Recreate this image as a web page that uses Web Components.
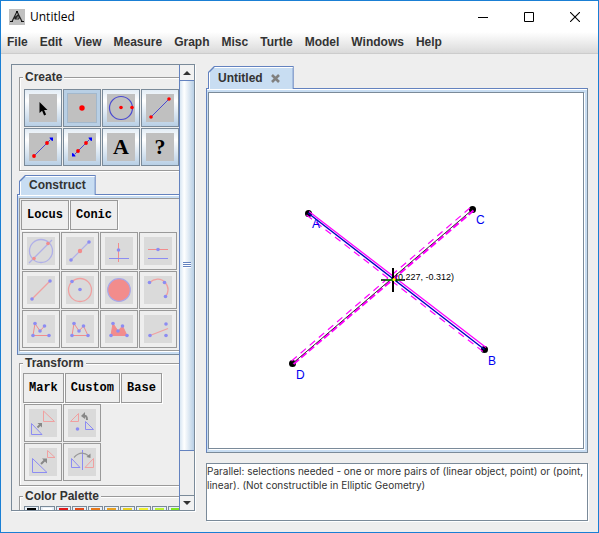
<!DOCTYPE html>
<html lang="en">
<head>
<meta charset="utf-8">
<title>Untitled</title>
<style>
body { margin: 0; font: bold 12px/15px "Liberation Sans", Arial, sans-serif; color: #333; }
</style>
</head>
<body>
<app-window></app-window>
<script>
const define = (name, html, setup) => {
  const tpl = document.createElement('template');
  tpl.innerHTML = html;
  customElements.define(name, class extends HTMLElement {
    constructor() {
      super();
      this.attachShadow({ mode: 'open' }).append(tpl.content.cloneNode(true));
    }
    connectedCallback() { if (setup) setup.call(this, this.shadowRoot); }
  });
};

const R = '#ff0000', LINE = '#4a4ad0';
const r = '#f28c8c', b = '#8c8cf2', lr = '#f0a0a0', lb = '#b0b0e8';
const dot = (x, y, c, s = 1.8) => `<circle cx="${x}" cy="${y}" r="${s}" fill="${c}"/>`;
const seg = (d, c, w = 1) => `<path d="${d}" fill="none" stroke="${c}" stroke-width="${w}"/>`;
const ICONS = {
  select: '<path d="M10.5 8v11l2.6-2.3 2 4.7 2-.9-2-4.5h3.4z" fill="#000"/>',
  point: dot(14, 14, R, 2.7),
  circle: '<circle cx="14" cy="14" r="11.5" fill="none" stroke="#4a4ad0" stroke-width="1.2"/>' + dot(14, 13.5, R) + dot(25, 13.5, R),
  segment: seg('M5 23L23 5', LINE) + dot(5, 23, R) + dot(23, 5, R),
  ray: seg('M5 23L21 7', LINE) + dot(5, 23, R, 1.9) + dot(18, 10, R, 1.9) + '<path d="M20.500 4.500H24V8L22.500 7.500 21 6z" fill="#00f"/>',
  line: seg('M7 21L21 7', LINE) + dot(10, 18, R, 1.9) + dot(18, 10, R, 1.9) + '<path d="M20.500 4.500H24V8L22.500 7.500 21 6zM4 20V23.500H7.500L7 22 5.500 20.500z" fill="#00f"/>',
  text: '<text x="14" y="21" text-anchor="middle">A</text>',
  help: '<text x="14" y="21" text-anchor="middle">?</text>',
  intersect: `<circle cx="14" cy="14" r="11.500" fill="none" stroke="${lb}" stroke-width="1.300"/>` + seg('M2 26L25 3', lb, 1.3) + dot(21, 6.5, r) + dot(7, 21.5, r),
  midpoint: seg('M5 23L23 5', lb, 1.2) + dot(5, 23, b) + dot(23, 5, b) + dot(14, 14, r, 2.2),
  perpendicular: seg('M13.500 6v19', r) + seg('M4 21.500h20', b) + dot(13.5, 13, b),
  parallel: seg('M4 12.500h20', r) + seg('M4 21.500h20', b) + dot(14, 12.5, b),
  segment2: seg('M5 23L23 5', lr, 1.2) + dot(5, 23, b) + dot(23, 5, b),
  circle2: `<circle cx="14" cy="14" r="11.500" fill="none" stroke="${lr}" stroke-width="1.300"/>` + dot(14, 13.5, b) + dot(6, 5.5, b),
  disc: `<circle cx="14" cy="14" r="11.300" fill="${r}" stroke="#a8a8e8" stroke-width="1.200"/>`,
  arc: seg('M5.500 6.500C10 2.500 17 1.500 21 6.500C25.500 11 24.500 17 21.500 20.500', lr, 1.3) + dot(5.5, 6.5, b) + dot(20.5, 6.5, b) + dot(21.5, 20.5, b),
  polyline: seg('M22 20.500H6L8 8.500L13 16L17.500 11', r) + [[6, 20.5], [8, 8.5], [13, 16], [17.5, 11], [22, 20.5]].map(p => dot(...p, b)).join(''),
  polygon: seg('M22 20.500H6L8 8.500L13 16L17.500 11Z', r) + [[6, 20.5], [8, 8.5], [13, 16], [17.5, 11], [22, 20.5]].map(p => dot(...p, b)).join(''),
  area: `<path d="M22 20.500H6L8 8.500L13 16L17.500 11Z" fill="${r}" stroke="${r}"/>` + [[6, 20.5], [8, 8.5], [13, 16], [17.5, 11], [22, 20.5]].map(p => dot(...p, b)).join(''),
  bisector: seg('M6 20.500L24 13.500', lr, 1.3) + dot(6, 20.5, b) + dot(22, 9, b) + dot(22, 20.5, b),
  translate: seg('M14.500 2v10.500H25.500Z', lr) + seg('M2.500 14.500V25.500H13Z', b) + seg('M8.500 18.500L12 15', '#888', 2) + '<path d="M8.500 14H13v4.500z" fill="#888"/>',
  rotate: seg('M2.500 12.500L10.500 4.500V12.500Z', lr) + seg('M17.500 12.500V20.500H25.500Z', b) + dot(9.5, 20, b) + seg('M15 7q4-1.500 4 4', '#888', 2) + '<path d="M13 7l4-4v7z" fill="#888"/>',
  dilate: seg('M3.500 10.500V24.500H18Z', b) + seg('M18.500 2.500V9.500H26Z', lr) + seg('M12 16L16 12', '#888', 2) + '<path d="M13 10.500h5v5z" fill="#888"/>',
  reflect: seg('M14.500 2v20', b) + seg('M3.500 10.500V19.500H12Z', b) + seg('M25.500 10.500V19.500H17Z', lr) + seg('M6 9.500Q13 1.500 21 8', '#999', 1.2) + '<path d="M18.500 9l4-3.500v4.500z" fill="#888"/>'
};

define('tool-button', `
<style>
:host { display: block; }
button { display: block; width: 38px; height: 38px; padding: 4px; margin: 0; box-sizing: border-box;
  border: 1px solid #7a8a99; background: linear-gradient(#e2ecf5, #fff 30%, #b8cfe5); }
svg { display: block; width: 28px; height: 28px; background: #c0c0c0; }
text { font: bold 22px "Liberation Serif", serif; fill: #000; }
:host([pressed]) button { background: #b8cfe5; padding: 3px; }
:host([pressed]) svg { border: 1px solid #a3b8cc; }
:host([disabled]) button { background: #eee; border-color: #999; }
:host([disabled]) svg { background: #dadada; }
</style>
<button type="button"><svg viewBox="0 0 28 28"></svg></button>`, function (root) {
  const name = this.getAttribute('icon');
  const button = root.querySelector('button');
  button.setAttribute('aria-label', name);
  button.disabled = this.hasAttribute('disabled');
  if (this.hasAttribute('pressed')) button.setAttribute('aria-pressed', 'true');
  root.querySelector('svg').innerHTML = ICONS[name];
});

define('tool-grid', `
<style>:host { display: grid; grid-template-columns: repeat(var(--cols, 4), 38px); gap: 1px; padding: var(--grid-top, 1px) 1px 1px; }</style>
<slot></slot>`);

define('menu-choice', `
<style>
:host { display: block; }
button { display: block; height: 30px; margin: 0; padding: 0 5px; background: #eee; border: 1px solid #999;
  box-shadow: 1px 1px 0 #fff; color: #000; font: bold 12px/15px "Liberation Mono", "Courier New", monospace; }
</style>
<button type="button"><slot></slot></button>`);

define('choice-row', `<style>:host { display: flex; gap: 1px; }</style><slot></slot>`);

define('titled-group', `
<style>
:host { display: block; }
fieldset { margin: 0; padding: var(--pad-top, 3px) 3px 3px; border: 1px solid #999; min-width: 0;
  box-shadow: 1px 1px 0 #fff, inset 1px 1px 0 #fff; }
legend { padding: 0 2px; margin-left: 0; background: #eee; }
</style>
<fieldset><legend></legend><slot></slot></fieldset>`, function (root) {
  root.querySelector('legend').textContent = this.getAttribute('label');
});

define('tab-pane', `
<style>
:host { display: flex; flex-direction: column; }
.tab { align-self: flex-start; position: relative; z-index: 1; margin: 0 0 -1px 2px; padding: 1px 1px 0;
  background: #6382bf; clip-path: polygon(6px 0, 100% 0, 100% 100%, 0 100%, 0 6px); }
.face { display: flex; align-items: center; gap: 8px; height: var(--tab-height, 19px); padding: 0 9px 1px 8px;
  background: #c8ddf2; border: solid #fff; border-width: 1px 0 0 1px; box-sizing: border-box;
  clip-path: polygon(6px 0, 100% 0, 100% 100%, 0 100%, 0 6px); }
.close { border: 0; padding: 0; margin: 0 4px 0 0; width: 9px; height: 9px; background: none; display: none; }
:host([closable]) .close { display: block; }
svg { display: block; }
.page { flex: 1; display: flex; flex-direction: column; padding: 3px 3px 3px 1px; background: #c8ddf2;
  border: 1px solid; border-color: #6382bf #7a8a99 #7a8a99 #6382bf; box-shadow: inset 0 1px 0 #fff; }
.body { flex: 1; display: flex; flex-direction: column; border: 1px solid var(--edge, #7a8a99); padding: var(--inset, 0);
  background: var(--page, #fff); box-shadow: 1px 1px 0 #fff; overflow: hidden; }
</style>
<div class="tab"><div class="face"><span></span>
<button class="close" type="button" aria-label="Close"><svg width="9" height="9" viewBox="0 0 9 9">
<path d="M1 1L8 8M8 1L1 8" stroke="#808080" stroke-width="2.600"/></svg></button></div></div>
<div class="page"><div class="body"><slot></slot></div></div>`, function (root) {
  root.querySelector('span').textContent = this.getAttribute('label');
});

define('color-swatches', `
<style>
:host { display: flex; gap: 1px; padding: 0 1px 1px; }
button { flex: none; width: 15px; height: 15px; margin: 0; padding: 0; border: 1px solid #7a8a99;
  box-shadow: inset 2px 0 #e8eff7, inset -2px 0 #e8eff7, inset 0 1px #e8eff7, inset 0 -1px #e8eff7; }
</style>`, function (root) {
  for (const c of ['#000', '#fff', '#e01818', '#e04818', '#e87818', '#e8a020', '#e8d020', '#f0f030', '#b8f030', '#80e820', '#40e020']) {
    const s = document.createElement('button');
    s.type = 'button';
    s.setAttribute('aria-label', c);
    s.style.backgroundColor = c;
    root.append(s);
  }
});

define('scroll-rail', `
<style>
:host { display: grid; grid-template-rows: 15px 370fr 44fr 15px; width: 15px; flex: none; box-sizing: border-box;
  background: #eee; border-left: 1px solid #6382bf; }
button { border: 0; margin: 0; padding: 0; background: #f2f2f2; display: grid; place-items: center; }
.down { border-top: 1px solid #7a8a99; }
.thumb { border: solid #6382bf; border-width: 1px 0; display: grid; place-items: center;
  background: linear-gradient(90deg, #d8e6f3, #fff 30%, #b8cfe5); }
.grip { width: 8px; height: 6px; background: repeating-linear-gradient(#6382bf 0 1px, #fff 1px 2px); }
</style>
<button type="button" aria-label="Scroll up"><svg width="8" height="4"><path d="M4 0L8 4H0z" fill="#333"/></svg></button>
<div class="thumb"><div class="grip"></div></div>
<div></div>
<button type="button" class="down" aria-label="Scroll down"><svg width="8" height="4"><path d="M0 0H8L4 4z" fill="#333"/></svg></button>`);

define('tool-panel', `
<style>
:host { display: flex; box-sizing: border-box; width: 184px; flex: none; min-height: 0; border: 1px solid #7a8a99; box-shadow: 1px 1px 0 #fff; }
.view { flex: 1; min-width: 0; overflow: hidden; }
.tools { display: flex; flex-direction: column; width: 190px; padding: 5px 0 0 7px; box-sizing: border-box; }
tab-pane { margin: 4px 0 1px -2px; --edge: #999; --page: #eee; --inset: 1px; --grid-top: 2px; }
titled-group + titled-group { margin-top: 3px; }
.two { --cols: 2; }
.tight { --pad-top: 2px; }
</style>
<div class="view"><div class="tools">
<titled-group label="Create"><tool-grid>
<tool-button icon="select"></tool-button><tool-button icon="point" pressed></tool-button><tool-button icon="circle"></tool-button><tool-button icon="segment"></tool-button>
<tool-button icon="ray"></tool-button><tool-button icon="line"></tool-button><tool-button icon="text"></tool-button><tool-button icon="help"></tool-button>
</tool-grid></titled-group>
<tab-pane label="Construct">
<choice-row><menu-choice>Locus</menu-choice><menu-choice>Conic</menu-choice></choice-row>
<tool-grid>
<tool-button icon="intersect" disabled></tool-button><tool-button icon="midpoint" disabled></tool-button><tool-button icon="perpendicular" disabled></tool-button><tool-button icon="parallel" disabled></tool-button>
<tool-button icon="segment2" disabled></tool-button><tool-button icon="circle2" disabled></tool-button><tool-button icon="disc" disabled></tool-button><tool-button icon="arc" disabled></tool-button>
<tool-button icon="polyline" disabled></tool-button><tool-button icon="polygon" disabled></tool-button><tool-button icon="area" disabled></tool-button><tool-button icon="bisector" disabled></tool-button>
</tool-grid>
</tab-pane>
<titled-group class="tight" label="Transform">
<choice-row><menu-choice>Mark</menu-choice><menu-choice>Custom</menu-choice><menu-choice>Base</menu-choice></choice-row>
<tool-grid class="two">
<tool-button icon="translate" disabled></tool-button><tool-button icon="rotate" disabled></tool-button>
<tool-button icon="dilate" disabled></tool-button><tool-button icon="reflect" disabled></tool-button>
</tool-grid></titled-group>
<titled-group class="tight" label="Color Palette"><color-swatches></color-swatches></titled-group>
</div></div>
<scroll-rail></scroll-rail>`);

define('geo-canvas', `
<style>
:host { display: block; flex: 1; min-height: 0; background: #fff; }
svg { display: block; width: 100%; height: 100%; }
text { font: 12px "Liberation Sans", Arial, sans-serif; fill: #0000f0; }
.coords { font-size: 9px; fill: #000; }
</style>
<svg><g transform="translate(-209 -93)" fill="none">
<g fill="#000"><circle cx="308.500" cy="213.500" r="3.500"/><circle cx="484.500" cy="349.500" r="3.500"/><circle cx="472.500" cy="209.500" r="3.500"/><circle cx="292.500" cy="363.500" r="3.500"/></g>
<g stroke="#f0f">
<path d="M309 211.500L486 347.500" stroke-width="1.300"/>
<path d="M306.500 215L483 351.500" stroke-width="1.200" stroke-dasharray="7 5"/>
<path d="M291.500 361L470.500 207.500" stroke-width="1.200" stroke-dasharray="7 5"/>
<path d="M293.500 364L473.500 210.500" stroke-width="2.200" stroke-dasharray="7 3"/></g>
<path d="M292.500 363.500L472.500 209.500" stroke="#222" stroke-width=".9"/>
<path d="M308 213L484.500 349.500" stroke="#0000c0" stroke-width="1.400"/>
<path d="M393 268v24" stroke="#000" stroke-width="2"/><path d="M381 280h24" stroke="#000" stroke-width="1.500"/>
<path d="M385 280h16" stroke="#00d000"/><circle cx="394" cy="279.500" r="1.500" fill="#ff0"/>
<text x="312" y="228">A</text><text x="488" y="365">B</text><text x="476" y="224">C</text><text x="296" y="379">D</text>
<text class="coords" x="395" y="280">(0.227, -0.312)</text>
</g></svg>`);

define('status-pane', `
<style>
:host { display: block; box-sizing: border-box; min-height: 58px; border: 1px solid #7a8a99; background: #fff;
  box-shadow: 1px 1px 0 #fff; font: 10px/14px Inter, "Liberation Sans", sans-serif; }
</style>
<slot></slot>`);

define('title-bar', `
<style>
:host { display: flex; align-items: center; height: 31px; padding-left: 8px; background: #fff; color: #000;
  font: 12px/16px "Open Sans", "Noto Sans", sans-serif; }
.logo { margin-right: 5px; background: #c0c0c0; }
span { flex: 1; }
button { width: 46px; height: 30px; padding: 0; margin: 0; border: 0; background: none; display: grid; place-items: center; }
</style>
<svg class="logo" width="16" height="16"><path d="M8 2.500L3 12.500M8 2.500l1 2 4 8M5 9.500L9.500 5.500l1 3-1 1.500h-3l1-2h2" fill="none" stroke="#222" stroke-width="1.200"/><path d="M1 12h3v1H1zM12 12h3v1h-3zM7 2h2v2H7z" fill="#111"/></svg>
<span><slot></slot></span>
<button type="button" aria-label="Minimize"><svg width="10" height="10"><path d="M0 5.500h10" stroke="#000"/></svg></button>
<button type="button" aria-label="Maximize"><svg width="10" height="10"><path d="M.5.5h9v9h-9z" fill="none" stroke="#000"/></svg></button>
<button type="button" aria-label="Close"><svg width="10" height="10"><path d="M0 0L10 10M10 0L0 10" stroke="#000" stroke-width="1.100"/></svg></button>`);

define('menu-bar', `
<style>
:host { display: flex; gap: 12px; height: 21px; padding-left: 6px; background: linear-gradient(#fff, #dadada);
  border-bottom: 1px solid #ccc; }
button { border: 0; margin: 0; padding: 0; background: none; font: inherit; color: inherit; }
</style>`, function (root) {
  for (const label of ['File', 'Edit', 'View', 'Measure', 'Graph', 'Misc', 'Turtle', 'Model', 'Windows', 'Help']) {
    const item = document.createElement('button');
    item.type = 'button';
    item.textContent = label;
    root.append(item);
  }
});

define('app-window', `
<style>
:host { display: flex; flex-direction: column; box-sizing: border-box; height: 100vh; background: #eee; border: 1px solid #1a7fd4; overflow: hidden; }
main { flex: 1; min-height: 0; display: flex; gap: 11px; padding: 10px 10px 11px; }
tool-panel { margin-bottom: 10px; }
.work { flex: 1; min-width: 0; display: flex; flex-direction: column; gap: 10px; padding-top: 2px; }
tab-pane { flex: 1; min-height: 0; --tab-height: 22px; }
</style>
<title-bar>Untitled</title-bar>
<menu-bar></menu-bar>
<main>
<tool-panel></tool-panel>
<div class="work">
<tab-pane label="Untitled" closable><geo-canvas></geo-canvas></tab-pane>
<status-pane>Parallel: selections needed - one or more pairs of (linear object, point) or (point, linear). (Not constructible in Elliptic Geometry)</status-pane>
</div>
</main>`);
</script>
</body>
</html>
